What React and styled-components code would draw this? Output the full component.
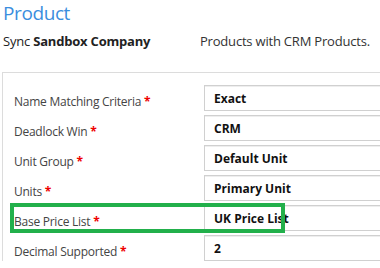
import React from 'react'
import styled, { createGlobalStyle } from 'styled-components'

const fields = [
  { label: 'Name Matching Criteria', value: 'Exact' },
  { label: 'Deadlock Win', value: 'CRM' },
  { label: 'Unit Group', value: 'Default Unit' },
  { label: 'Units', value: 'Primary Unit' },
  { label: 'Base Price List', value: 'UK Price List', highlight: true },
  { label: 'Decimal Supported', value: '2' },
]

function App() {
  return (
    <Page>
      <Global />
      <Title>Product</Title>
      <SyncRow>
        <Sync>Sync <b>Sandbox Company</b></Sync>
        <Desc>Products with CRM Products.</Desc>
      </SyncRow>
      <Panel>
        {fields.map(f => (
          <Row key={f.label}>
            <Label>{f.label} <Req>*</Req></Label>
            <ValueBox>{f.value}</ValueBox>
            {f.highlight && <Highlight />}
          </Row>
        ))}
      </Panel>
    </Page>
  )
}

export default App

const Global = createGlobalStyle`
  body {
    margin: 0;
    background: #fff;
    font-family: "Open Sans", "Noto Sans", sans-serif;
    overflow: hidden;
  }
`
const Page = styled.div`
  width: 380px;
  height: 268px;
  overflow: hidden;
`
const Title = styled.div`
  color: #3b8ede;
  font-size: 19px;
  letter-spacing: -0.4px;
  line-height: 26px;
  padding-left: 3px;
`
const SyncRow = styled.div`
  display: flex;
  align-items: center;
  height: 26px;
  margin-top: 2px;
  padding-left: 3px;
  font-size: 13px;
  letter-spacing: -0.2px;
  color: #222;
`
const Sync = styled.div`
  width: 197px;
  b { font-weight: 700; }
`
const Desc = styled.div`
  color: #333;
`
const Panel = styled.div`
  margin: 18px 0 0 2px;
  width: 480px;
  border-top: 1px solid #dcdcdc;
  border-left: 1px solid #dcdcdc;
  padding: 12px 0 0 8px;
  display: flex;
  flex-direction: column;
  gap: 4px;
`
const Row = styled.div`
  position: relative;
  display: grid;
  grid-template-columns: 193px 260px;
  align-items: center;
  height: 26px;
`
const Label = styled.div`
  font-size: 12px;
  letter-spacing: -0.25px;
  color: #444;
  padding-left: 3px;
  padding-top: 6px;
`
const Req = styled.span`
  color: #e00;
  font-weight: 700;
`
const ValueBox = styled.div`
  height: 26px;
  box-sizing: border-box;
  border: 1px solid #d0d0d0;
  border-right: none;
  box-shadow: inset 0 1px 0 #eee;
  display: flex;
  align-items: center;
  padding-left: 9px;
  font-size: 12px;
  font-weight: 700;
  color: #111;
`
const Highlight = styled.div`
  position: absolute;
  left: -1px;
  top: -2px;
  width: 275px;
  height: 30px;
  box-sizing: border-box;
  border: 4px solid #22b04b;
`
